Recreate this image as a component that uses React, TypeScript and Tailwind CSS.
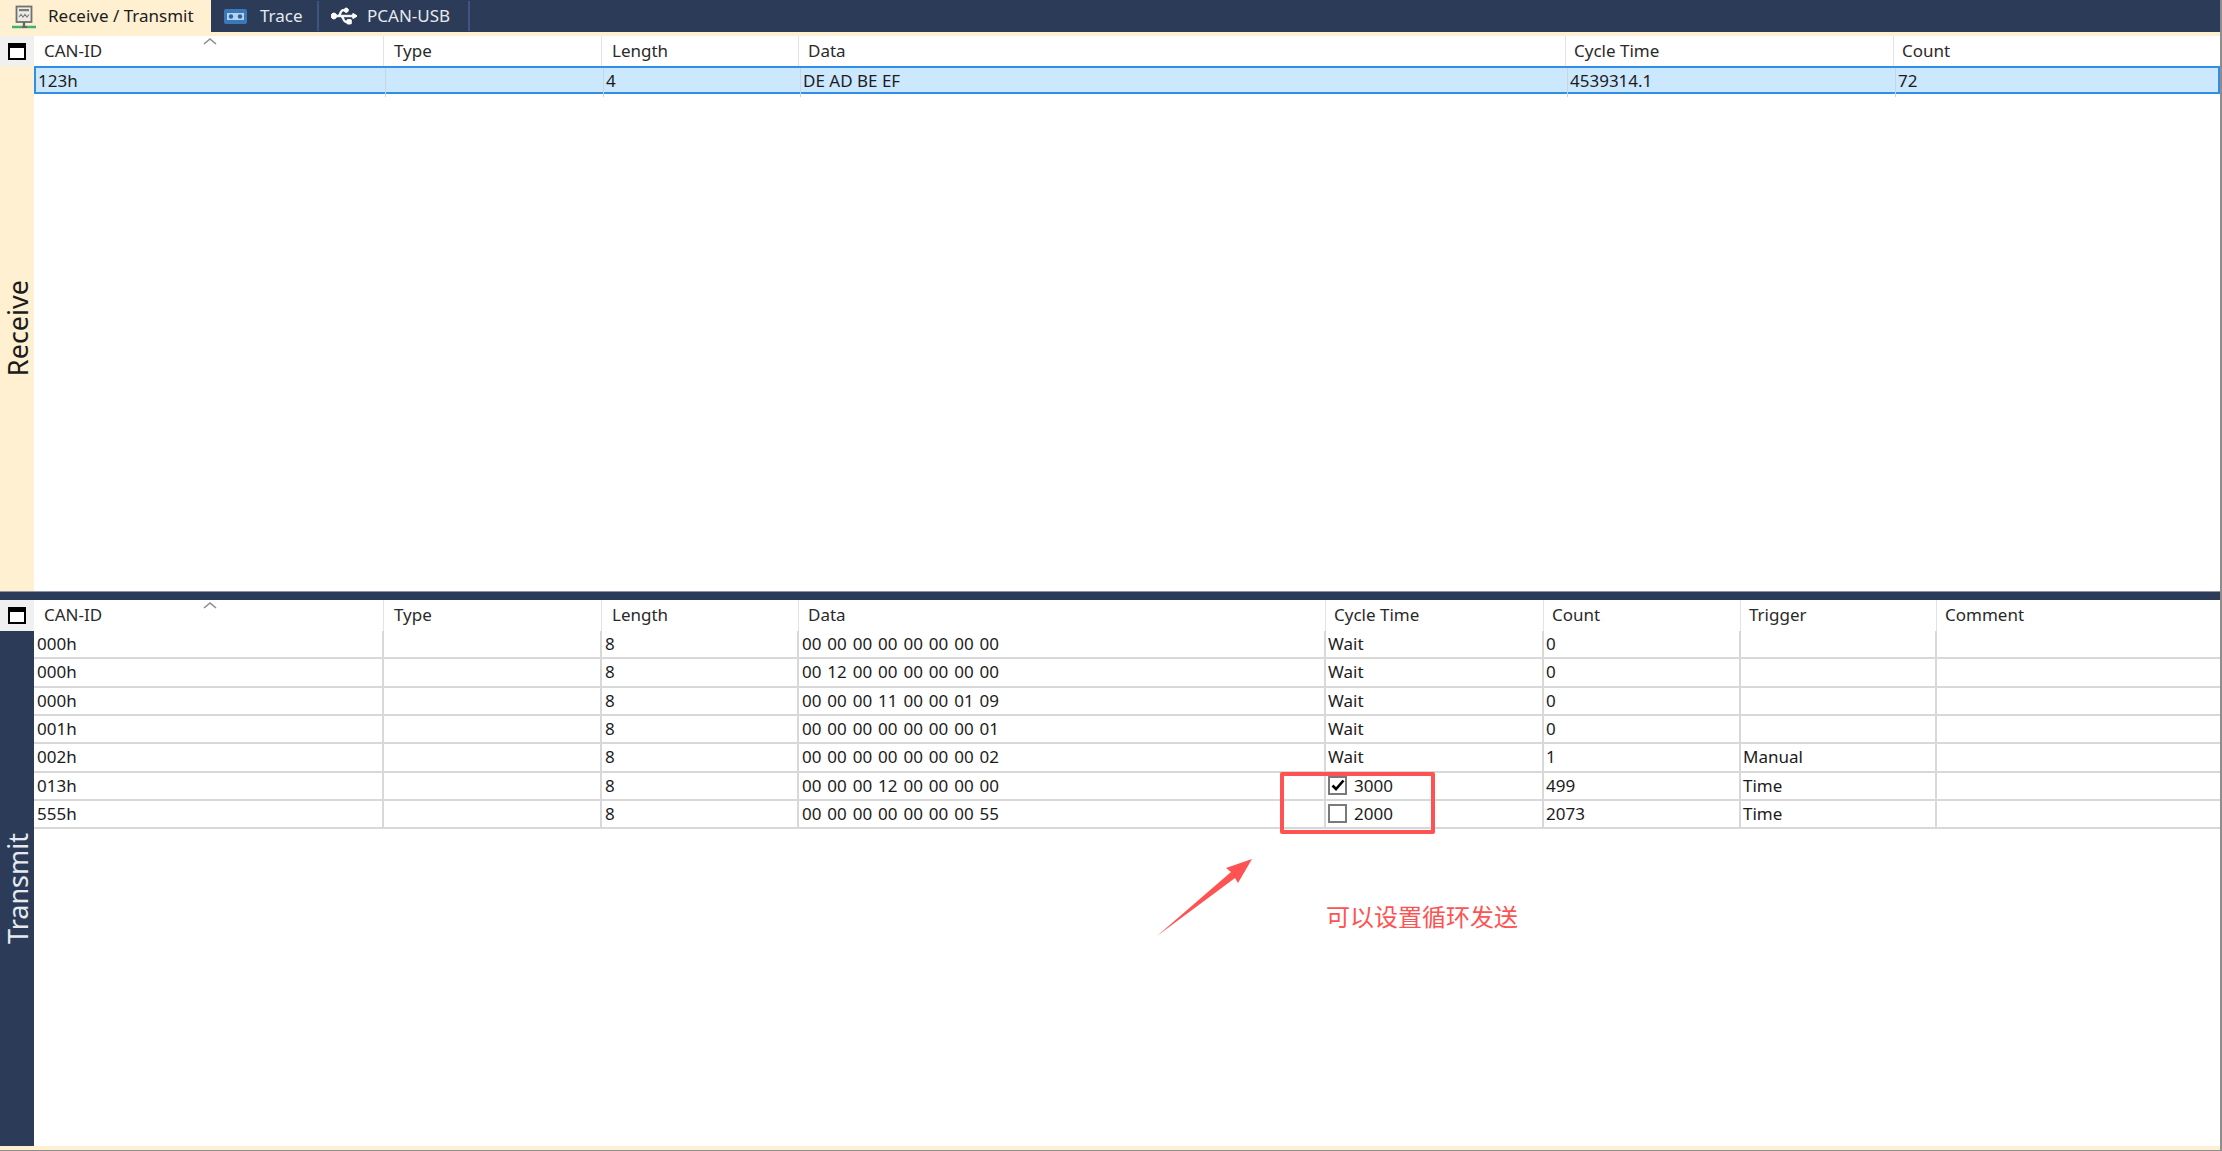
import { FaUsb } from "react-icons/fa"

const FONT = "font-['Noto_Sans','Liberation_Sans',sans-serif]"

const RECEIVE_COLS = "grid-cols-[350px_218px_197px_767px_328px_1fr]"
const TRANSMIT_COLS = "grid-cols-[350px_218px_197px_527px_218px_197px_196px_1fr]"

const transmitRows = [
  ["000h", "", "8", "00 00 00 00 00 00 00 00", "Wait", "0", "", ""],
  ["000h", "", "8", "00 12 00 00 00 00 00 00", "Wait", "0", "", ""],
  ["000h", "", "8", "00 00 00 11 00 00 01 09", "Wait", "0", "", ""],
  ["001h", "", "8", "00 00 00 00 00 00 00 01", "Wait", "0", "", ""],
  ["002h", "", "8", "00 00 00 00 00 00 00 02", "Wait", "1", "Manual", ""],
  ["013h", "", "8", "00 00 00 12 00 00 00 00", "[x] 3000", "499", "Time", ""],
  ["555h", "", "8", "00 00 00 00 00 00 00 55", "[ ] 2000", "2073", "Time", ""],
]

function NetworkIcon() {
  return (
    <svg width="24" height="26" viewBox="0 0 24 26" className="shrink-0">
      <rect x="4.500" y="3.500" width="15" height="15.500" fill="#ecebe4" stroke="#6f7270" strokeWidth="1.800" />
      <rect x="7" y="6" width="10" height="2.200" fill="#7d7d78" />
      <path d="M7 14l2-2.500 2 2.500 2-2.500 2 2.500 2-2.500" fill="none" stroke="#7d7d78" strokeWidth="1.100" />
      <path d="M12 19v4" stroke="#666" strokeWidth="2.400" />
      <path d="M0 24h10M15 24h9" stroke="#3fb56a" strokeWidth="2.400" />
      <path d="M10 24h5" stroke="#666" strokeWidth="2.400" />
    </svg>
  )
}

function TraceIcon() {
  return (
    <svg width="23" height="15" viewBox="0 0 23 15" className="shrink-0">
      <rect width="23" height="15" rx="2" fill="#3a78b8" />
      <rect x="3" y="4" width="17" height="7" fill="#b5d3ef" />
      <circle cx="7" cy="7.500" r="2.200" fill="#2b62a0" />
      <circle cx="16" cy="7.500" r="2.200" fill="#2b62a0" />
    </svg>
  )
}

function WindowIcon() {
  return (
    <div className="flex h-full w-[34px] shrink-0 items-center justify-center bg-[#f0f0f0]">
      <div className="h-[17px] w-[18px] border-2 border-t-[5px] border-black bg-white" />
    </div>
  )
}

function SortCaret() {
  return (
    <svg width="14" height="8" viewBox="0 0 14 8" className="absolute left-[169px] top-px">
      <path d="M1 7l6-5 6 5" fill="none" stroke="#8c8c8c" strokeWidth="1.600" />
    </svg>
  )
}

function HeaderRow({ cols, labels, height }: { cols: string; labels: string[]; height: string }) {
  return (
    <div className={`flex shrink-0 ${height}`}>
      <WindowIcon />
      <div className={`relative grid flex-1 ${cols}`}>
        <SortCaret />
        {labels.map((label, i) => (
          <div
            key={label}
            className={`flex items-center border-r border-[#e3e3e3] pb-px text-[17px] text-[#2a2a2a] last:border-r-0 ${i < 3 ? "pl-[10px]" : i === 3 ? "pl-[9px]" : "pl-[8px]"}`}
          >
            {label}
          </div>
        ))}
      </div>
    </div>
  )
}

function CycleCell({ value }: { value: string }) {
  if (!value.startsWith("[")) return <>{value}</>
  const checked = value.startsWith("[x]")
  return (
    <div className="flex items-center gap-[7px]">
      <div className="flex h-[19px] w-[19px] items-center justify-center border-2 border-[#7a7a7a] bg-white">
        {checked && (
          <svg width="14" height="12" viewBox="0 0 14 12">
            <path d="M1.500 6.500l3.500 3.500 7.500-8.500" fill="none" stroke="#000" strokeWidth="2.600" />
          </svg>
        )}
      </div>
      {value.slice(4)}
    </div>
  )
}

function SideLabel({ text, className }: { text: string; className: string }) {
  return (
    <div className={`flex w-[34px] shrink-0 items-center justify-center ${className}`}>
      <span className="rotate-180 text-[27px] leading-none [writing-mode:vertical-rl]">{text}</span>
    </div>
  )
}

export default function App() {
  return (
    <div className={`relative flex h-[1151px] w-[2222px] flex-col overflow-hidden border-r-2 border-[#8d8d8d] bg-white ${FONT}`}>
      {/* tabs */}
      <div className="flex h-[32px] shrink-0 bg-[#2b3b58] text-[17px]">
        <div className="flex w-[211px] items-center gap-[12px] bg-[#fff0d2] pl-[12px] text-[#1c1c1c]">
          <NetworkIcon />
          Receive / Transmit
        </div>
        <div className="my-px flex w-[108px] items-center gap-[13px] border-r-2 border-[#3d5580] pl-[13px] text-[#e6e9ee]">
          <TraceIcon />
          Trace
        </div>
        <div className="my-px flex w-[151px] items-center gap-[10px] border-r-2 border-[#3d5580] pl-[12px] text-[#e6e9ee]">
          <FaUsb size={26} stroke="currentColor" strokeWidth={24} className="shrink-0 text-white" />
          PCAN-USB
        </div>
      </div>
      <div className="h-[4px] shrink-0 bg-[#fff0d2]" />

      {/* receive */}
      <div className="flex h-[555px] shrink-0 flex-col">
        <HeaderRow cols={RECEIVE_COLS} height="h-[30px]" labels={["CAN-ID", "Type", "Length", "Data", "Cycle Time", "Count"]} />
        <div className="flex flex-1">
          <SideLabel text="Receive" className="bg-[#fff0d2] text-[#1c1c1c]" />
          <div className="flex-1">
            <div className={`grid h-[28px] border-2 border-[#2f8fe6] bg-[#cce8ff] text-[17px] text-[#1c1c1c] ${RECEIVE_COLS}`}>
              {["123h", "", "4", "DE AD BE EF", "4539314.1", "72"].map((cell, i) => (
                <div key={i} className="flex items-center border-r border-[#c9d6e0] pb-[3px] pl-[2px] last:border-r-0">
                  {cell}
                </div>
              ))}
            </div>
          </div>
        </div>
      </div>

      {/* splitter */}
      <div className="h-[9px] shrink-0 border-t border-[#8d93a0] bg-[#2b3b58]" />

      {/* transmit */}
      <div className="flex flex-1 flex-col">
        <HeaderRow
          cols={TRANSMIT_COLS}
          height="h-[31px]"
          labels={["CAN-ID", "Type", "Length", "Data", "Cycle Time", "Count", "Trigger", "Comment"]}
        />
        <div className="flex flex-1">
          <SideLabel text="Transmit" className="bg-[#2b3b58] text-[#e6e9ee]" />
          <div className="flex-1">
            {transmitRows.map((row, r) => (
              <div key={r} className={`grid h-[28.33px] border-b-2 border-[#d8d8d8] text-[17px] text-[#1c1c1c] ${TRANSMIT_COLS}`}>
                {row.map((cell, i) => (
                  <div
                    key={i}
                    className={`flex items-center border-r-2 border-[#d8d8d8] pb-px last:border-r-0 ${i >= 4 ? "pl-[2px]" : "pl-[3px]"} ${i === 3 ? "[word-spacing:1.5px]" : ""}`}
                  >
                    {i === 4 ? <CycleCell value={cell} /> : cell}
                  </div>
                ))}
              </div>
            ))}
          </div>
        </div>
      </div>

      <div className="h-[5px] shrink-0 border-b border-[#8d8d8d] bg-[#fff0d2]" />

      {/* annotation */}
      <div className="absolute left-[1280px] top-[772px] h-[62px] w-[155px] rounded-[2px] border-4 border-[#ff5252]" />
      <svg width="110" height="90" viewBox="1150 850 110 90" className="absolute left-[1150px] top-[850px]">
        <polygon points="1157,936 1231,872 1226,868 1252,859 1238,883 1235,878" fill="#ff5252" />
      </svg>
      <div className="absolute left-[1326px] top-[899px] font-['Noto_Sans_CJK_SC',sans-serif] text-[24px] leading-[34px] text-[#ff5252]">
        可以设置循环发送
      </div>
    </div>
  )
}
